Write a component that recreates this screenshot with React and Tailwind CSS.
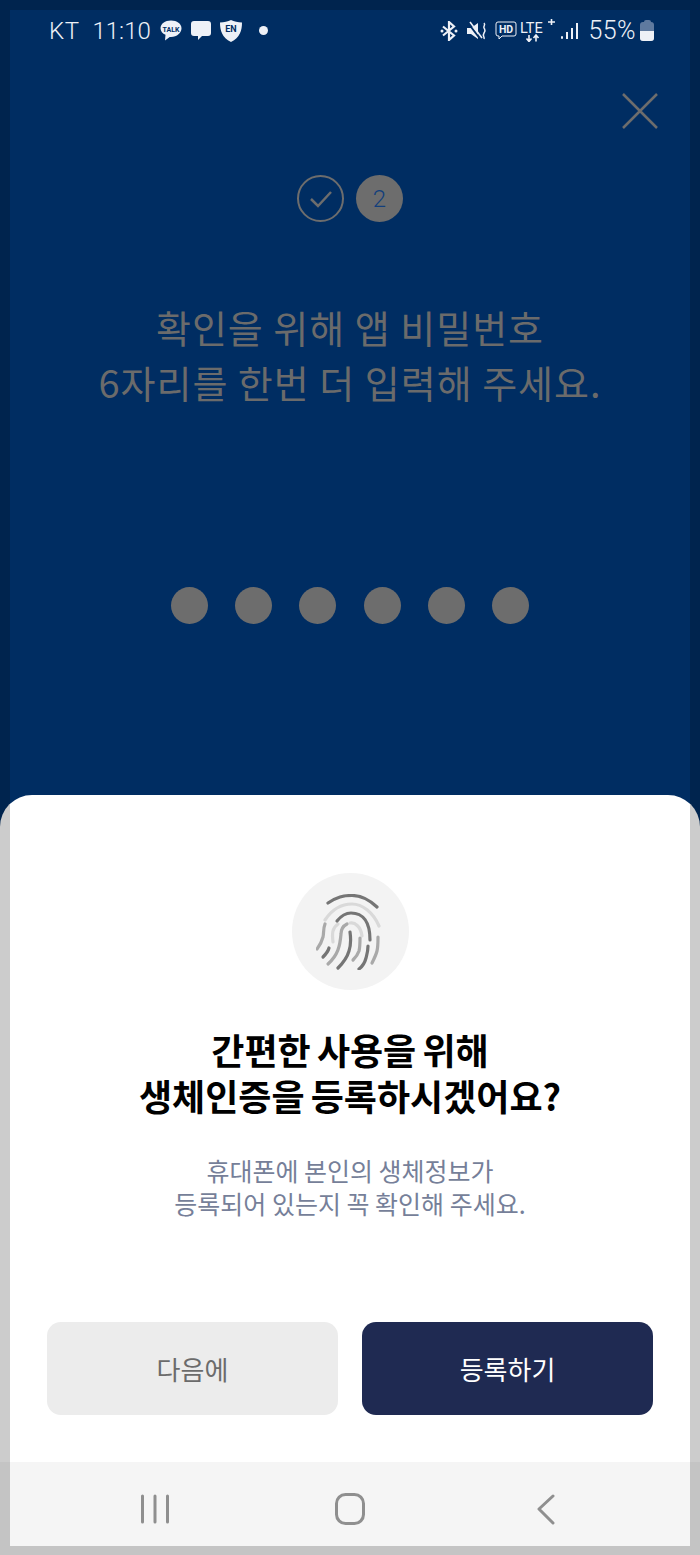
import React from 'react';

const KR = 'font-["Noto_Sans_CJK_KR","Noto_Sans",sans-serif]';

function TalkIcon() {
  return (
    <svg width="22" height="21" viewBox="0 0 22 21">
      <path d="M11 0.500C5 0.500 0.500 3.900 0.500 8.200c0 2.900 2 5.300 5 6.600L5 20.500l4.700-3.600c.5.100.9.100 1.300.100 6 0 10.500-4.400 10.500-8.800S17 0.500 11 0.500z" fill="#eef1f7" />
      <text x="11" y="11.500" textAnchor="middle" fontSize="7" fontWeight="700" fill="#002d62" fontFamily="Roboto, sans-serif">TALK</text>
    </svg>
  );
}

function ChatIcon() {
  return (
    <svg width="20" height="19" viewBox="0 0 20 19">
      <path d="M3 0h14a3 3 0 0 1 3 3v9a3 3 0 0 1-3 3h-6l-4 4v-4H3a3 3 0 0 1-3-3V3a3 3 0 0 1 3-3z" fill="#eef1f7" />
    </svg>
  );
}

function ShieldIcon() {
  return (
    <svg width="24" height="22" viewBox="0 0 24 22">
      <path d="M12 0c3 1.500 7 2.400 11 2.400 0 8-2 15-11 19.600C3 17.400 1 10.400 1 2.400 5 2.400 9 1.500 12 0z" fill="#eef1f7" />
      <text x="12" y="11.500" textAnchor="middle" fontSize="9" fontWeight="700" fill="#002d62" fontFamily="Roboto, sans-serif">EN</text>
    </svg>
  );
}

function BluetoothIcon() {
  return (
    <svg width="18" height="20" viewBox="0 0 18 20" fill="none" stroke="#eef1f7" strokeWidth="2.200">
      <path d="M3 5.500l11 9-5 4.500V1l5 4.500-11 9" />
      <circle cx="2" cy="10" r="1.500" fill="#eef1f7" stroke="none" />
      <circle cx="16" cy="10" r="1.500" fill="#eef1f7" stroke="none" />
    </svg>
  );
}

function MuteIcon() {
  return (
    <svg width="20" height="20" viewBox="0 0 20 20" fill="none">
      <path d="M0 7h4l7-5v16L4 13H0z" fill="#eef1f7" />
      <path d="M1 2l13 17" stroke="#002d62" strokeWidth="2" />
      <path d="M3 1l12 16" stroke="#eef1f7" strokeWidth="1.500" />
      <path d="M17 2c2 2-1 3 0 5s2 2 0 5 1 4 0 6" stroke="#eef1f7" strokeWidth="1.500" />
    </svg>
  );
}

function HdIcon() {
  return (
    <svg width="22" height="20" viewBox="0 0 22 20">
      <path d="M3 1h16a2 2 0 0 1 2 2v10a2 2 0 0 1-2 2H7l-3 3v-3H3a2 2 0 0 1-2-2V3a2 2 0 0 1 2-2z" fill="none" stroke="#eef1f7" strokeWidth="1" />
      <text x="11" y="12" textAnchor="middle" fontSize="10.500" fontWeight="700" fill="#eef1f7" fontFamily="Roboto, sans-serif">HD</text>
    </svg>
  );
}

function LteIcon() {
  return (
    <svg width="36" height="23" viewBox="0 0 36 23">
      <text x="0" y="13.500" fontSize="14.500" fontWeight="400" fill="#eef1f7" fontFamily="Roboto, sans-serif">LTE</text>
      <path d="M28 3h7M31.500 0v6" stroke="#eef1f7" strokeWidth="1.600" />
      <path d="M9 16v6M6.500 19.500L9 22.500l2.500-3M16 22.500v-6M13.500 19l2.500-3 2.500 3" stroke="#eef1f7" strokeWidth="1.600" fill="none" />
    </svg>
  );
}

function SignalIcon() {
  return (
    <svg width="18" height="20" viewBox="0 0 18 20" fill="#eef1f7">
      <rect x="0" y="15" width="2" height="3" rx="1" />
      <rect x="5" y="11" width="2" height="7" />
      <rect x="10" y="7" width="2" height="11" />
      <rect x="15" y="2" width="2" height="16" />
    </svg>
  );
}

function BatteryIcon() {
  return (
    <div className="flex flex-col items-center">
      <div className="w-[7px] h-[2px] rounded-t-sm bg-[#5f7a9f]" />
      <div className="w-[14px] h-[19px] rounded-[3px] overflow-hidden bg-[#5f7a9f] flex flex-col justify-end">
        <div className="h-[10px] bg-[#eef1f7]" />
      </div>
    </div>
  );
}

function StatusBar() {
  return (
    <div className="h-[42px] pt-[19px] pl-[49px] pr-[46px] flex items-center justify-between text-[#eef1f7] font-['Roboto',sans-serif]">
      <div className="flex items-center">
        <span className="text-[24px] font-light tracking-[0.5px] leading-none">KT</span>
        <span className="text-[24px] font-light ml-[13px] leading-none">11:10</span>
        <div className="ml-[9px] flex items-center"><TalkIcon /></div>
        <div className="ml-[9px] flex items-center"><ChatIcon /></div>
        <div className="ml-[8px] flex items-center"><ShieldIcon /></div>
        <div className="ml-[16px] w-[9px] h-[9px] rounded-full bg-[#eef1f7]" />
      </div>
      <div className="flex items-center">
        <BluetoothIcon />
        <div className="ml-[9px]"><MuteIcon /></div>
        <div className="ml-[8px]"><HdIcon /></div>
        <div className="ml-[3px]"><LteIcon /></div>
        <div className="ml-[5px]"><SignalIcon /></div>
        <span className="ml-[10px] text-[25px] font-light tracking-[0.4px] leading-none">55%</span>
        <div className="ml-[4px]"><BatteryIcon /></div>
      </div>
    </div>
  );
}

function FingerprintIcon() {
  return (
    <svg width="65" height="76" viewBox="0 0 65 76" fill="none" strokeLinecap="round" strokeWidth="3.200">
      <g stroke="#d9d9d9">
        <path d="M9 26C17 14 27 10 36 10c10 0 21 8 27 22" />
        <path d="M17 48c-1-8-1-14 5-18" />
        <path d="M34 29c5-1 11 4 12 13" />
      </g>
      <g stroke="#a9a9a9">
        <path d="M9 30c-2 5-1 9-2 13-1 4-3 8-6 12" />
        <path d="M31 30c-4 2-6 5-6 10-1 12-3 21-13 30" />
        <path d="M44 44c0 4 0 9-1 13-1 3-3 6-6 9" />
        <path d="M62 43c0 5 0 10-1 14-1 4-3 8-5 12" />
      </g>
      <g stroke="#757575">
        <path d="M12 9C21 3 27 1.500 36 1.500c9 0 17 4 25 11.500" />
        <path d="M21 27c4-5 9-8 14-8 12 0 19 9 19 27" />
        <path d="M13 54c-1 4-3 6-6 9" />
        <path d="M34 38c1 7 1 13-1 19-2 7-6 12-11 17" />
        <path d="M52 52c0 5-1 8-2 12-1 4-3 8-7 11" />
      </g>
    </svg>
  );
}

function NavBar() {
  return (
    <div className="h-[93px] bg-[#f5f5f5] flex justify-center items-center gap-[164px] pr-[4px]">
      <svg width="30" height="30" viewBox="0 0 30 30" stroke="#8f8f8f" strokeWidth="3" strokeLinecap="round">
        <path d="M2.500 2v26M15 2v26M27.500 2v26" />
      </svg>
      <div className="flex items-center gap-[170px]">
        <svg width="32" height="32" viewBox="0 0 32 32" fill="none" stroke="#8f8f8f" strokeWidth="3">
          <rect x="2.500" y="1.500" width="27" height="29" rx="9" />
        </svg>
        <svg width="20" height="32" viewBox="0 0 20 32" fill="none" stroke="#8f8f8f" strokeWidth="3" strokeLinecap="round" strokeLinejoin="round">
          <path d="M17 3L3 16l14 14" />
        </svg>
      </div>
    </div>
  );
}

export default function App() {
  return (
    <div className={`relative w-[700px] h-[1555px] overflow-hidden bg-white ${KR}`}>
      {/* dimmed pin screen behind the sheet */}
      <div className="h-[827px] bg-[#002d62]">
        <StatusBar />
        <div className="flex justify-end pr-[41px] pt-[50px]">
          <svg width="38" height="38" viewBox="0 0 38 38" stroke="#6d6d6d" strokeWidth="2.500">
            <path d="M2 2l34 34M36 2L2 36" />
          </svg>
        </div>
        <div className="flex justify-center gap-[12px] mt-[45px]">
          <div className="w-[47px] h-[47px] rounded-full border-2 border-[#6d6d6d] flex items-center justify-center">
            <svg width="24" height="20" viewBox="0 0 24 20" fill="none" stroke="#6d6d6d" strokeWidth="2.500">
              <path d="M2 10l7 7L22 3" />
            </svg>
          </div>
          <div className="w-[47px] h-[47px] rounded-full bg-[#6d6d6d] flex items-center justify-center text-[24px] text-[#123f7c] font-['Roboto',sans-serif] font-light">
            2
          </div>
        </div>
        <div className="mt-[77px] text-center text-[38px] tracking-[1px] leading-[55px] font-normal text-[#6b6b6b]">
          <p>확인을 위해 앱 비밀번호</p>
          <p>6자리를 한번 더 입력해 주세요.</p>
        </div>
        <div className="mt-[178px] flex justify-center gap-[27.2px]">
          {[0, 1, 2, 3, 4, 5].map(i => (
            <div key={i} className="w-[37px] h-[37px] rounded-full bg-[#6d6d6d]" />
          ))}
        </div>
      </div>

      {/* biometric bottom sheet */}
      <div className="relative -mt-[32px] h-[760px] rounded-t-[32px] bg-white flex flex-col">
        <div className="flex-1 flex flex-col items-center pt-[78px]">
          <div className="w-[117px] h-[117px] rounded-full bg-[#f3f3f3] flex items-center justify-center pr-[4px]">
            <FingerprintIcon />
          </div>
          <div className="mt-[36px] text-center text-[36px] [word-spacing:-2px] leading-[46px] font-semibold text-black">
            <p>간편한 사용을 위해</p>
            <p>생체인증을 등록하시겠어요?</p>
          </div>
          <div className="mt-[36px] text-center text-[25px] leading-[33px] font-normal text-[#767f99]">
            <p>휴대폰에 본인의 생체정보가</p>
            <p>등록되어 있는지 꼭 확인해 주세요.</p>
          </div>
          <div className="mt-auto mb-[47px] flex gap-[24px]">
            <button className="w-[291px] h-[93px] rounded-[14px] bg-[#ececec] text-[26px] text-[#6b6b6b]">다음에</button>
            <button className="w-[291px] h-[93px] rounded-[14px] bg-[#1f2a52] text-[26px] text-white">등록하기</button>
          </div>
        </div>
        <NavBar />
      </div>

      {/* translucent edge of the window preview */}
      <div className="absolute inset-0 border-[10px] border-b-[9px] border-black/20 pointer-events-none" />
    </div>
  );
}
